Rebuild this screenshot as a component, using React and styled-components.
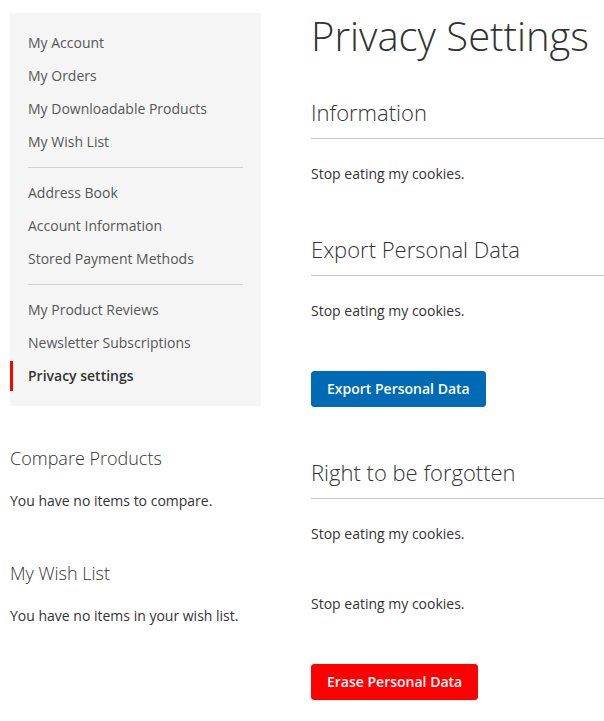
import React from 'react';
import styled, { createGlobalStyle } from 'styled-components';

const GlobalStyle = createGlobalStyle`
  html, body {
    margin: 0;
    padding: 0;
    background: #fff;
  }
  body {
    font-family: 'Open Sans', 'Liberation Sans', sans-serif;
    font-size: 14px;
    line-height: 20px;
    color: #333;
    overflow-x: hidden;
  }
`;

const navGroups = [
  ['My Account', 'My Orders', 'My Downloadable Products', 'My Wish List'],
  ['Address Book', 'Account Information', 'Stored Payment Methods'],
  ['My Product Reviews', 'Newsletter Subscriptions', 'Privacy settings'],
];

const Page = styled.div`
  display: flex;
  align-items: flex-start;
  padding: 13px 0 20px 10px;
`;

const Sidebar = styled.div`
  width: 251px;
  flex-shrink: 0;
  display: flex;
  flex-direction: column;
`;

const Nav = styled.ul`
  list-style: none;
  margin: 0;
  padding: 15px 0 15px;
  background: #f5f5f5;
  display: flex;
  flex-direction: column;
  gap: 3px;
`;

const NavItem = styled.li`
  padding: 5px 18px 5px 15px;
  border-left: 3px solid ${({ active }) => (active ? '#ff0000' : 'transparent')};
  color: ${({ active }) => (active ? '#333' : '#575757')};
  font-weight: ${({ active }) => (active ? 600 : 400)};
  font-size: 14px;
  line-height: 20px;
`;

const Delimiter = styled.li`
  border-top: 1px solid #d1d1d1;
  margin: 7px 18px;
`;

const SideBlock = styled.div`
  margin-top: ${({ first }) => (first ? '42px' : '52px')};
`;

const SideTitle = styled.h3`
  margin: 0 0 23px;
  font-size: 18px;
  line-height: 20px;
  font-weight: 300;
  color: #333;
`;

const Text = styled.p`
  margin: ${({ spaced }) => (spaced ? '50px 0 0' : '0')};
  font-size: 14px;
  line-height: 20px;
  color: #333;
`;

const Main = styled.div`
  flex: 1;
  min-width: 0;
  margin-left: 50px;
`;

const Title = styled.h1`
  margin: 0 0 40px;
  font-size: 40px;
  line-height: 46px;
  font-weight: 300;
  color: #333;
  white-space: nowrap;
`;

const Section = styled.section`
  margin-top: ${({ first }) => (first ? '0' : '52px')};
`;

const SectionTitle = styled.h2`
  margin: 0 0 25px;
  padding-bottom: 13px;
  border-bottom: 1px solid #c6c6c6;
  font-size: 22px;
  line-height: 26px;
  font-weight: 300;
  color: #333;
`;

const Button = styled.button`
  display: inline-block;
  margin-top: 50px;
  padding: 7px 15px;
  border: 1px solid ${({ danger }) => (danger ? '#ff0000' : '#006bb4')};
  border-radius: 3px;
  background: ${({ danger }) => (danger ? '#ff0000' : '#006bb4')};
  color: #fff;
  font-family: 'Open Sans', 'Liberation Sans', sans-serif;
  font-size: 14px;
  line-height: 20px;
  font-weight: 600;
  cursor: pointer;
`;

export default function App() {
  return (
    <>
      <GlobalStyle />
      <Page>
        <Sidebar>
          <Nav>
            {navGroups.map((group, gi) => (
              <React.Fragment key={gi}>
                {gi > 0 && <Delimiter />}
                {group.map((label) => (
                  <NavItem key={label} active={label === 'Privacy settings'}>
                    {label}
                  </NavItem>
                ))}
              </React.Fragment>
            ))}
          </Nav>
          <SideBlock first>
            <SideTitle>Compare Products</SideTitle>
            <Text>You have no items to compare.</Text>
          </SideBlock>
          <SideBlock>
            <SideTitle>My Wish List</SideTitle>
            <Text>You have no items in your wish list.</Text>
          </SideBlock>
        </Sidebar>
        <Main>
          <Title>Privacy Settings</Title>
          <Section first>
            <SectionTitle>Information</SectionTitle>
            <Text>Stop eating my cookies.</Text>
          </Section>
          <Section>
            <SectionTitle>Export Personal Data</SectionTitle>
            <Text>Stop eating my cookies.</Text>
            <Button>Export Personal Data</Button>
          </Section>
          <Section>
            <SectionTitle>Right to be forgotten</SectionTitle>
            <Text>Stop eating my cookies.</Text>
            <Text spaced>Stop eating my cookies.</Text>
            <Button danger>Erase Personal Data</Button>
          </Section>
        </Main>
      </Page>
    </>
  );
}
